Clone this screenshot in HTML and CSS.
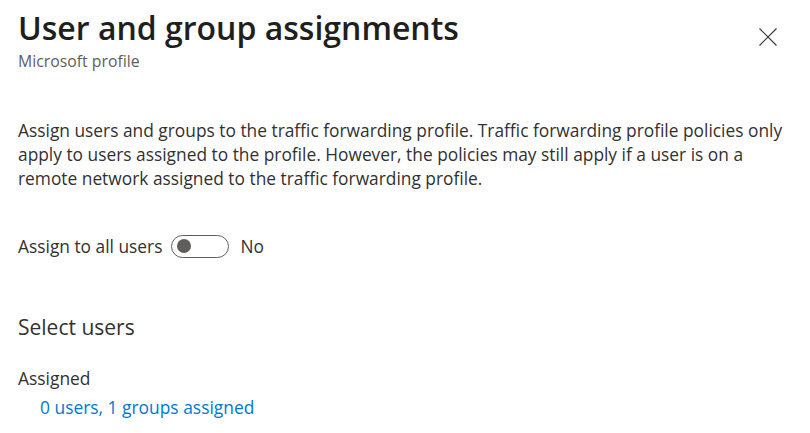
FILE: index.html
```html
<!DOCTYPE html>
<html lang="en">
<head>
<meta charset="utf-8">
<link rel="stylesheet" href="styles.css">
<title>User and group assignments</title>
</head>
<body>
<div class="panel">
  <header class="header">
    <div class="titles">
      <h1 class="title">User and group assignments</h1>
      <div class="subtitle">Microsoft profile</div>
    </div>
    <button class="close" aria-label="Close">
      <svg width="18" height="18" viewBox="0 0 18 18"><path d="M0.5 0.5L17.5 17.5M17.5 0.5L0.5 17.5" stroke="#3b3a39" stroke-width="1.2" fill="none"/></svg>
    </button>
  </header>
  <p class="desc">Assign users and groups to the traffic forwarding profile. Traffic forwarding profile policies only<br>apply to users assigned to the profile. However, the policies may still apply if a user is on a<br>remote network assigned to the traffic forwarding profile.</p>
  <div class="toggle-row">
    <span class="label">Assign to all users</span>
    <span class="toggle"><span class="knob"></span></span>
    <span class="state">No</span>
  </div>
  <h2 class="section">Select users</h2>
  <div class="field-label">Assigned</div>
  <a class="link" href="#">0 users, 1 groups assigned</a>
</div>
</body>
</html>
```
FILE: styles.css
```css
html, body { margin: 0; padding: 0; background: #fff; }
body { font-family: "Open Sans", "Noto Sans", sans-serif; color: #323130; }
.panel { padding: 0 18px; width: 774px; }
.header { display: flex; justify-content: space-between; align-items: flex-start; padding-top: 8px; }
.title { margin: 0; font-size: 32px; font-weight: 600; line-height: 40px; color: #201f1e; }
.subtitle { font-size: 15.8px; color: #605e5c; line-height: 20px; margin-top: 3px; }
.close { border: 0; background: none; padding: 0; margin: 20px 15px 0 0; width: 18px; height: 18px; display: flex; }
.desc { margin: 47px 0 0; font-size: 17.35px; line-height: 24px; white-space: nowrap; }
.toggle-row { display: flex; align-items: center; margin-top: 43px; height: 26px; font-size: 17.35px; }
.toggle { width: 58px; height: 23px; border: 1px solid #605e5c; border-radius: 12px; box-sizing: border-box; margin: 0 11px 0 9px; display: flex; align-items: center; padding-left: 5px; }
.knob { width: 14px; height: 14px; border-radius: 50%; background: #605e5c; }
.section { margin: 55px 0 0; font-size: 21px; font-weight: 400; line-height: 26px; }
.field-label { margin-top: 26px; font-size: 17.4px; line-height: 24px; }
.link { display: inline-block; margin: 5px 0 0 22px; font-size: 17.4px; line-height: 24px; color: #0078d4; text-decoration: none; }
```
